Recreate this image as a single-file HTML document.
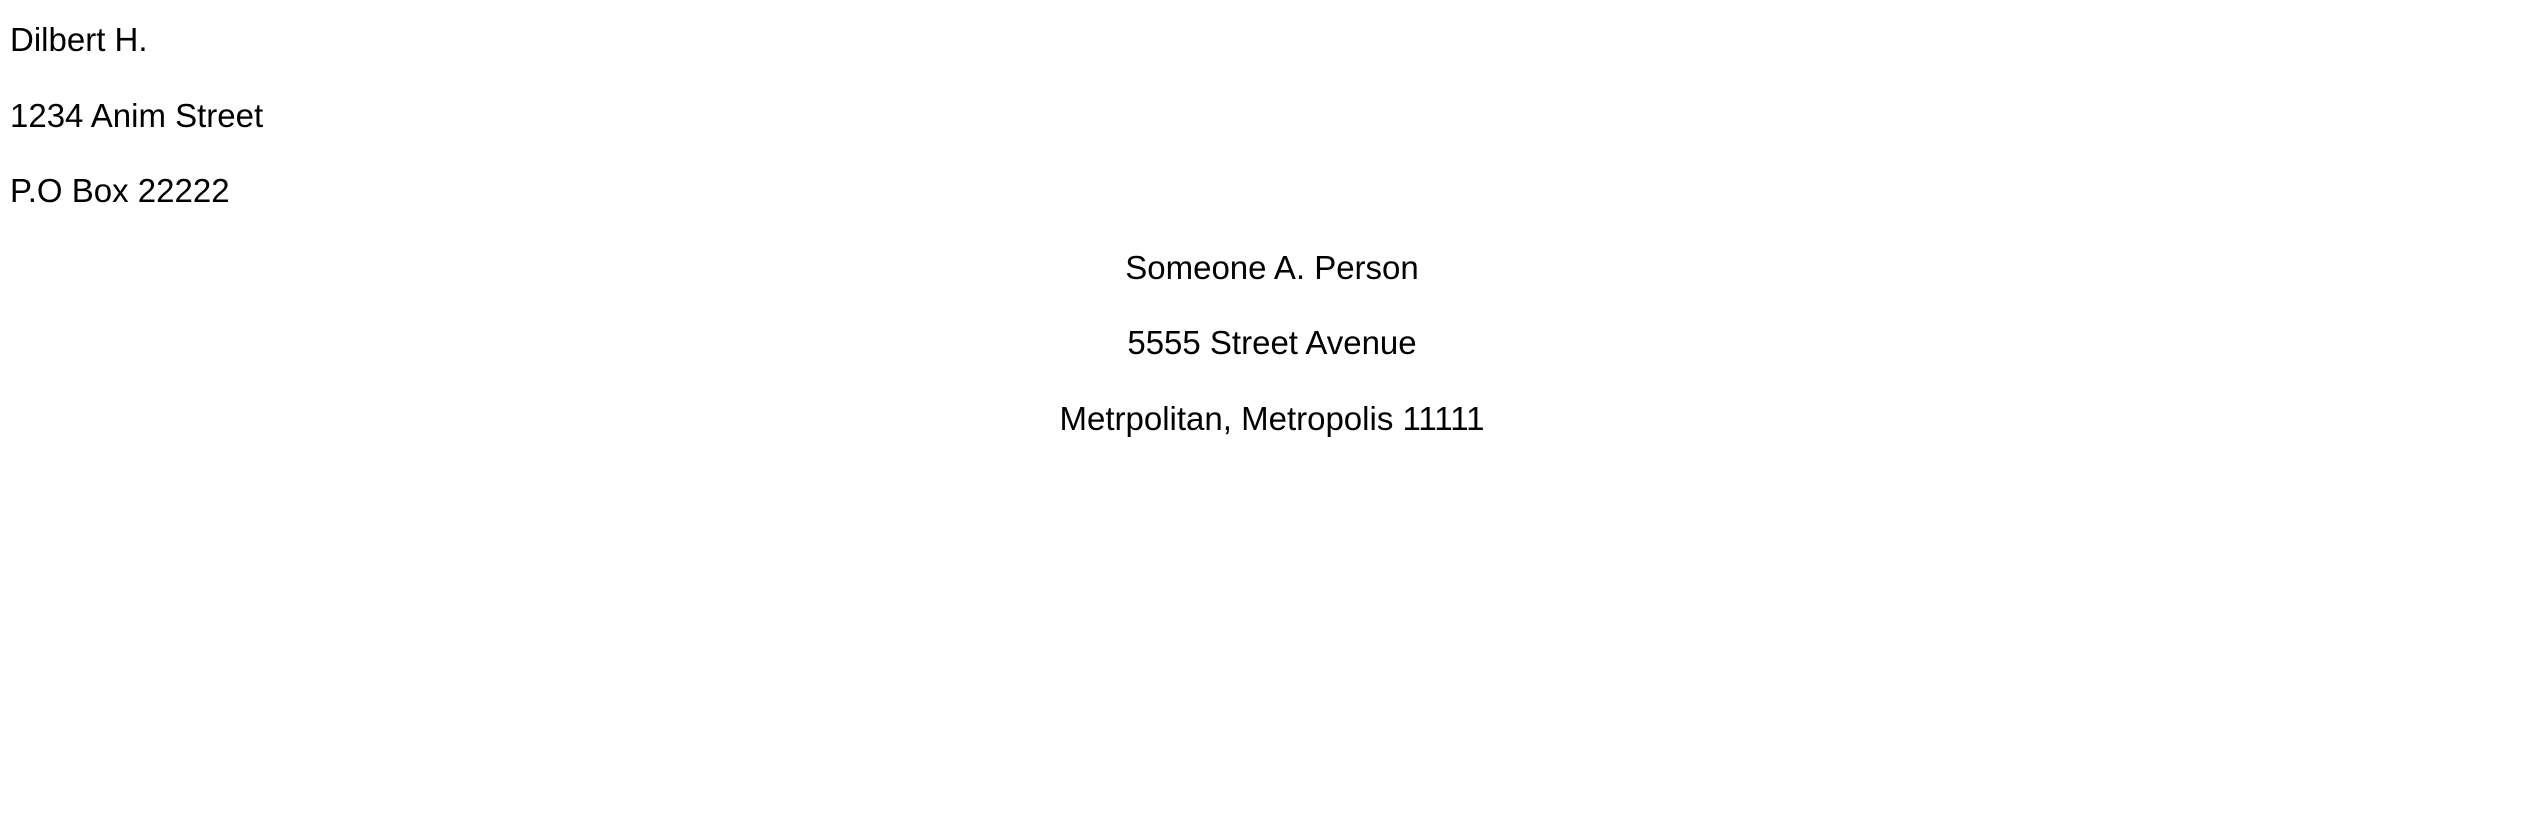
<!DOCTYPE html>
<html><head><style>
html,body{margin:0;padding:0;background:#fff;width:2544px;height:840px;overflow:hidden}
body{font-family:"Liberation Sans",sans-serif;font-size:33px;color:#000}
.l{position:absolute;left:10px;line-height:44px;white-space:nowrap}
.c{position:absolute;left:0;width:2544px;text-align:center;line-height:44px;white-space:nowrap}
</style></head><body>
<div class="l" style="top:18px">Dilbert H.</div>
<div class="l" style="top:94px">1234 Anim Street</div>
<div class="l" style="top:169px">P.O Box 22222</div>
<div class="c" style="top:246px">Someone A. Person</div>
<div class="c" style="top:321px">5555 Street Avenue</div>
<div class="c" style="top:397px">Metrpolitan, Metropolis 11111</div>
</body></html>
